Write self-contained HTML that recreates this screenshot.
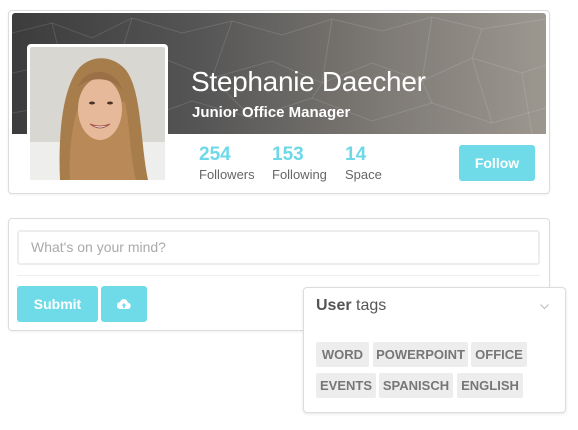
<!DOCTYPE html>
<html><head><style>
*{margin:0;padding:0;box-sizing:border-box}
body{width:578px;height:430px;background:#fff;position:relative;font-family:"Liberation Sans",sans-serif;overflow:hidden}
.abs{position:absolute}
.card{border:1px solid #dcdcdc;border-radius:4px;background:#fff;box-shadow:0 1px 2px rgba(0,0,0,.06)}
.num{color:#6dd9e8;font-weight:bold;font-size:19px}
.lbl{color:#666;font-size:13px}
.btn{background:#6fdbe8;border-radius:3px;color:#fff;font-weight:bold;font-size:14px;text-align:center}
.tag{position:absolute;background:#ededed;color:#777;font-weight:bold;font-size:13px;height:25px;line-height:25px;text-align:center;border-radius:2px}
</style></head><body>
<div class="abs card" style="left:8px;top:10px;width:542px;height:184px"></div>
<div class="abs" style="left:12px;top:13px;width:534px;height:121px;border-radius:3px 3px 0 0;overflow:hidden;background:linear-gradient(90deg,#3c3c3c 0%,#555 35%,#7e7a75 70%,#9c978f 100%)">
<svg width="534" height="121" style="position:absolute;left:0;top:0" fill="none" stroke="rgba(255,255,255,0.12)" stroke-width="1">
<path d="M0 20 L40 10 L80 25 L120 5 L170 20 L220 8 L270 22 L320 6 L370 18 L420 4 L470 16 L534 6"/>
<path d="M0 60 L50 50 L100 70 L150 45 L200 65 L260 48 L310 70 L360 50 L410 68 L460 45 L510 60 L534 52"/>
<path d="M0 100 L60 90 L120 110 L180 88 L240 105 L300 85 L360 108 L420 90 L480 110 L534 95"/>
<path d="M40 10 L50 50 L60 90 M120 5 L100 70 L120 110 M220 8 L200 65 L240 105 M320 6 L310 70 L300 85 M420 4 L410 68 L420 90 M470 16 L460 45 L480 110 M510 60 L520 121"/>
</svg></div>
<div class="abs" style="left:27px;top:44px;width:141px;height:140px;background:#fff;border-radius:4px;padding:3px">
<svg width="135" height="133" viewBox="0 0 135 133" style="display:block;border-radius:2px">
<rect width="135" height="133" fill="#d9d7d2"/>
<rect y="95" width="135" height="38" fill="#eeeeec"/>
<path d="M30 133 C28 90 32 40 50 20 C62 8 82 8 95 22 C112 42 110 95 118 133 Z" fill="#a87d4c"/>
<path d="M40 133 C38 100 44 70 50 55 L95 55 C100 80 100 110 106 133 Z" fill="#b98a57"/>
<ellipse cx="70" cy="62" rx="22" ry="31" fill="#e5b99a"/>
<path d="M48 40 C55 20 85 18 93 45 C85 30 60 28 48 40Z" fill="#9b7046"/>
<path d="M60 77 Q70 85 80 77 Q70 81 60 77Z" fill="#fff" stroke="#a4544a"/>
<ellipse cx="62" cy="56" rx="3" ry="1.5" fill="#4a3326"/><ellipse cx="80" cy="56" rx="3" ry="1.5" fill="#4a3326"/>
</svg></div>
<div class="abs" style="left:191px;top:66px;color:#fff;font-size:28px;font-weight:300;letter-spacing:-0.3px">Stephanie Daecher</div>
<div class="abs" style="left:192px;top:104px;color:#fff;font-size:15px;font-weight:bold">Junior Office Manager</div>
<div class="abs num" style="left:199px;top:144px">254</div>
<div class="abs lbl" style="left:199px;top:167px">Followers</div>
<div class="abs num" style="left:272px;top:144px">153</div>
<div class="abs lbl" style="left:272px;top:167px">Following</div>
<div class="abs num" style="left:345px;top:144px">14</div>
<div class="abs lbl" style="left:345px;top:167px">Space</div>
<div class="abs btn" style="left:459px;top:145px;width:76px;height:36px;line-height:36px">Follow</div>

<div class="abs card" style="left:8px;top:218px;width:542px;height:113px"></div>
<div class="abs" style="left:17px;top:230px;width:523px;height:35px;border:2px solid #ededed;border-radius:3px;color:#aaa;font-size:14px;line-height:31px;padding-left:12px">What's on your mind?</div>
<div class="abs" style="left:17px;top:275px;width:523px;height:1px;background:#eee"></div>
<div class="abs btn" style="left:17px;top:286px;width:81px;height:36px;line-height:36px">Submit</div>
<div class="abs btn" style="left:101px;top:286px;width:46px;height:36px">
<svg width="14" height="12" viewBox="0 0 14 12" style="margin-top:12px"><path d="M3.5 11 A3.5 3.5 0 0 1 3 4 A4 4 0 0 1 10.8 4.5 A3.3 3.3 0 0 1 11 11 Z" fill="#fff"/><path d="M7 5 L4.5 7.8 H6.2 V10 H7.8 V7.8 H9.5 Z" fill="#6fdbe8"/></svg></div>

<div class="abs card" style="left:303px;top:287px;width:263px;height:126px;box-shadow:0 1px 3px rgba(0,0,0,.1)"></div>
<div class="abs" style="left:316px;top:297px;font-size:16px;color:#555"><b>User</b> tags</div>
<svg class="abs" style="left:540px;top:304px" width="9" height="6"><path d="M0.5 0.5 L4.5 4.5 L8.5 0.5" stroke="#bbb" fill="none"/></svg>
<div class="tag" style="left:316px;top:342px;width:53px">WORD</div>
<div class="tag" style="left:373px;top:342px;width:95px">POWERPOINT</div>
<div class="tag" style="left:471px;top:342px;width:56px">OFFICE</div>
<div class="tag" style="left:316px;top:373px;width:60px">EVENTS</div>
<div class="tag" style="left:379px;top:373px;width:74px">SPANISCH</div>
<div class="tag" style="left:457px;top:373px;width:66px">ENGLISH</div>
</body></html>
